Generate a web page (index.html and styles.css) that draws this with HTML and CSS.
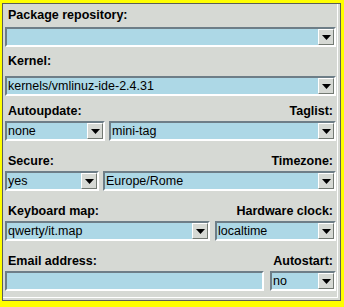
FILE: index.html
```html
<!DOCTYPE html>
<html>
<head>
<title>Setup</title>
<link rel="stylesheet" href="styles.css">
</head>
<body>

<div class="panel">
	<div class="section s1">
		<div class="labels"><span>Package repository:</span></div>
		<div class="fields">
			<div class="combo grow"><span class="value"></span><span class="arrow"><svg width="9" height="5" viewBox="0 0 9 5"><polygon points="0,0 9,0 4.5,5"/></svg></span></div>
		</div>
	</div>
	<div class="section s2">
		<div class="labels"><span>Kernel:</span></div>
		<div class="fields">
			<div class="combo grow"><span class="value">kernels/vmlinuz-ide-2.4.31</span><span class="arrow"><svg width="9" height="5" viewBox="0 0 9 5"><polygon points="0,0 9,0 4.5,5"/></svg></span></div>
		</div>
	</div>
	<div class="section s3">
		<div class="labels"><span>Autoupdate:</span><span>Taglist:</span></div>
		<div class="fields">
			<div class="combo w_autoupdate"><span class="value">none</span><span class="arrow"><svg width="9" height="5" viewBox="0 0 9 5"><polygon points="0,0 9,0 4.5,5"/></svg></span></div>
			<div class="combo grow"><span class="value">mini-tag</span><span class="arrow"><svg width="9" height="5" viewBox="0 0 9 5"><polygon points="0,0 9,0 4.5,5"/></svg></span></div>
		</div>
	</div>
	<div class="section s4">
		<div class="labels"><span>Secure:</span><span>Timezone:</span></div>
		<div class="fields">
			<div class="combo w_secure"><span class="value">yes</span><span class="arrow"><svg width="9" height="5" viewBox="0 0 9 5"><polygon points="0,0 9,0 4.5,5"/></svg></span></div>
			<div class="combo grow"><span class="value">Europe/Rome</span><span class="arrow"><svg width="9" height="5" viewBox="0 0 9 5"><polygon points="0,0 9,0 4.5,5"/></svg></span></div>
		</div>
	</div>
	<div class="section s5">
		<div class="labels"><span>Keyboard map:</span><span>Hardware clock:</span></div>
		<div class="fields">
			<div class="combo w_keymap"><span class="value">qwerty/it.map</span><span class="arrow"><svg width="9" height="5" viewBox="0 0 9 5"><polygon points="0,0 9,0 4.5,5"/></svg></span></div>
			<div class="combo grow"><span class="value">localtime</span><span class="arrow"><svg width="9" height="5" viewBox="0 0 9 5"><polygon points="0,0 9,0 4.5,5"/></svg></span></div>
		</div>
	</div>
	<div class="section s6">
		<div class="labels"><span>Email address:</span><span>Autostart:</span></div>
		<div class="fields">
			<div class="combo w_email"><span class="value"></span></div>
			<div class="combo grow"><span class="value">no</span><span class="arrow"><svg width="9" height="5" viewBox="0 0 9 5"><polygon points="0,0 9,0 4.5,5"/></svg></span></div>
		</div>
	</div>
</div>

</body>
</html>
```
FILE: styles.css
```css
	body
	{
		margin : 0px;
		background-color : #ffff00;
		font-family : "Liberation Sans", Arial, sans-serif;
		font-size : 12.5px;
	}
	.panel
	{
		box-sizing : border-box;
		margin : 3px 3px 0px 2px;
		height : 298px;
		padding : 0px 4px 0px 2px;
		background-color : #d6d9d4;
		border : 1px solid #5a5e5a;
		box-shadow : inset -2px -2px 0 #d6d9d4, inset -3px -3px 0 #ffffff;
	}
	.labels
	{
		display : flex;
		justify-content : space-between;
		padding : 0px 3px;
		height : 14px;
		line-height : 14px;
		font-weight : bold;
		color : #000000;
	}
	.fields
	{
		display : flex;
		gap : 4px;
	}
	.s1 { margin-top : 4px; }
	.s1 .labels { margin-bottom : 5px; }
	.s2 { margin-top : 7px; }
	.s2 .labels { margin-bottom : 8px; }
	.s3 { margin-top : 8px; }
	.s3 .labels { margin-bottom : 3px; }
	.s4, .s5, .s6 { margin-top : 13px; }
	.s4 .labels, .s5 .labels, .s6 .labels { margin-bottom : 3px; }
	.s5 .fields { gap : 5px; }
	.s6 .fields { gap : 6px; }
	.combo
	{
		box-sizing : border-box;
		display : flex;
		height : 20px;
		background-color : #add8e6;
		border-style : solid;
		border-width : 2px;
		border-color : #6e7e87 #ffffff #ffffff #6e7e87;
	}
	.grow { flex : 1; }
	.w_autoupdate { width : 100px; }
	.w_secure { width : 94px; }
	.w_keymap { width : 205px; }
	.w_email { width : 259px; }
	.value
	{
		flex : 1;
		padding-left : 1px;
		line-height : 16px;
		white-space : nowrap;
		overflow : hidden;
		color : #000000;
	}
	.arrow
	{
		box-sizing : border-box;
		display : flex;
		align-items : center;
		justify-content : center;
		width : 16px;
		height : 16px;
		background-color : #d6d9d4;
		border-style : solid;
		border-width : 1px;
		border-color : #ffffff #737a73 #737a73 #ffffff;
	}
	.arrow svg
	{
		display : block;
		fill : #000000;
	}
```
